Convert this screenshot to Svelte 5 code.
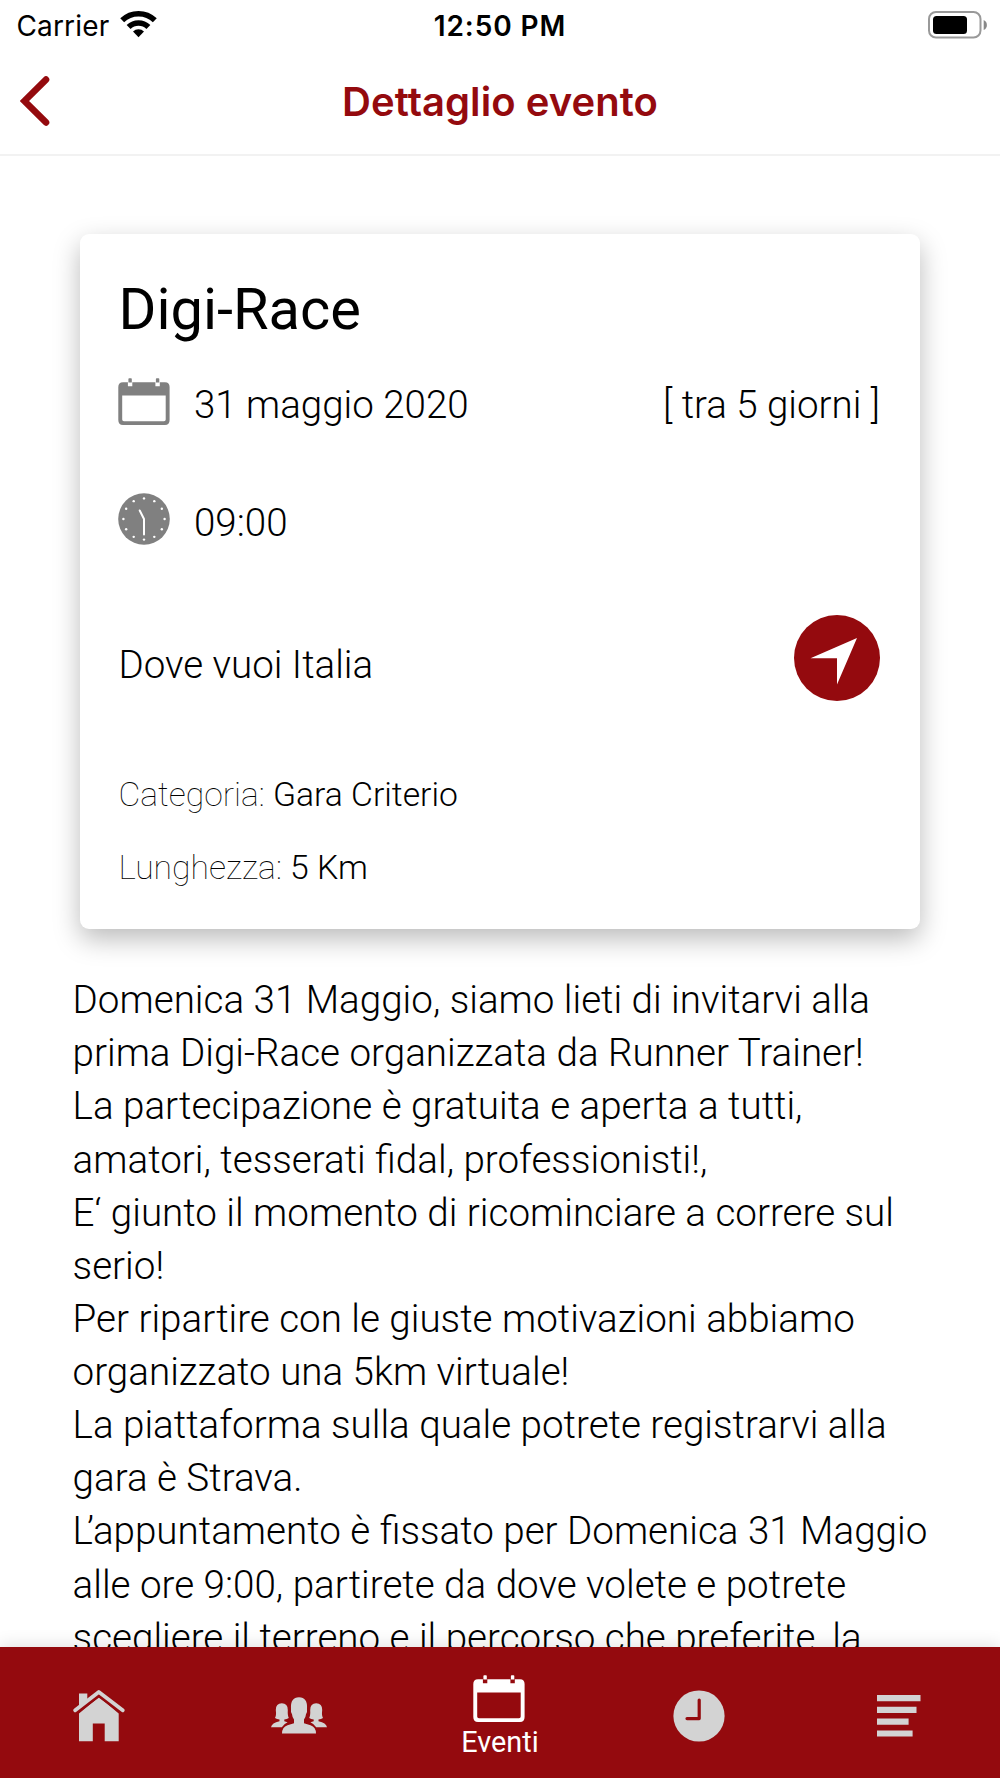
<script>
  const description = [
    { text: 'Domenica 31 Maggio, siamo lieti di invitarvi alla' },
    { text: 'prima Digi-Race organizzata da Runner Trainer!' },
    { text: 'La partecipazione è gratuita e aperta a tutti,' },
    { text: 'amatori, tesserati fidal, professionisti!,' },
    { text: 'E‘ giunto il momento di ricominciare a correre sul' },
    { text: 'serio!' },
    { text: 'Per ripartire con le giuste motivazioni abbiamo' },
    { text: 'organizzato una 5km virtuale!' },
    { text: 'La piattaforma sulla quale potrete registrarvi alla' },
    { text: 'gara è Strava.' },
    { initial: 'L', text: '’appuntamento è fissato per Domenica 31 Maggio' },
    { text: 'alle ore 9:00, partirete da dove volete e potrete' },
    { text: 'scegliere il terreno e il percorso che preferite, la' }
  ];
  const ticks = Array.from({ length: 12 }, (_, i) => {
    const a = (i * Math.PI) / 6;
    return { x: 26 + 20.6 * Math.sin(a), y: 26 - 20.6 * Math.cos(a) };
  });
</script>

{#snippet calendar()}
  <svg class="calendar" viewBox="0 0 52 48" width="52" height="48">
    <path
      fill="currentColor"
      fill-rule="evenodd"
      d="M5 4.3H9.9V8.3H14.3V4.3H37.4V8.3H41.8V4.3H47Q51.6 4.5 51.6 9V42Q51.6 47 47 47H5Q.3 47 .3 42V9Q.3 4.5 5 4.3ZM4.2 17.6V41.5Q4.2 43.2 6 43.2H46Q47.7 43.2 47.7 41.5V17.6Z"
    />
    <path fill="currentColor" d="M10.4 1Q10.4 .2 11.2 .2H13Q13.8 .2 13.8 1V4.5H10.4ZM37.9 1Q37.9 .2 38.7 .2H40.5Q41.3 .2 41.3 1V4.5H37.9Z" />
  </svg>
{/snippet}

<div class="screen">
  <div class="status">
    <div class="carrier">
      <span>Carrier</span>
      <svg viewBox="0 0 37 28" width="37" height="28">
        <path fill="none" stroke="#000" stroke-width="5.6" d="M2.2 10.3A23.4 23.4 0 0 1 34.8 10.3" />
        <path fill="none" stroke="#000" stroke-width="5.6" d="M8.6 17A14.2 14.2 0 0 1 28.4 17" />
        <path d="M18.5 27.2 13 21.5A7.8 7.8 0 0 1 24 21.5Z" />
      </svg>
    </div>
    <div class="time">12:50 PM</div>
    <svg class="battery" viewBox="0 0 60 28" width="60" height="28">
      <rect x="1" y="1" width="51.5" height="25.5" rx="7" fill="#fff" stroke="#999" stroke-width="2" />
      <rect x="5" y="5" width="34" height="18" rx="3.5" />
      <path fill="#888" d="M55.7 9Q58.9 10.5 58.9 14T55.7 19Z" />
    </svg>
  </div>

  <header class="header">
    <svg class="back" viewBox="0 0 30 50" width="30" height="50">
      <path fill="none" stroke="#940a0e" stroke-width="6.6" stroke-linecap="round" d="M26 3.6 4.5 25 26 46.4" />
    </svg>
    <h1>Dettaglio evento</h1>
  </header>

  <main class="content">
    <section class="card">
      <h2>Digi-Race</h2>
      <div class="row date">
        <span class="icon">{@render calendar()}</span>
        <span class="text">31 maggio 2020</span>
        <span class="text remaining">[ tra 5 giorni ]</span>
      </div>
      <div class="row hour">
        <svg class="icon" viewBox="0 0 52 52" width="52" height="52">
          <circle cx="26" cy="26" r="25.8" fill="#808080" />
          {#each ticks as t}
            <circle cx={t.x} cy={t.y} r="1.2" fill="#fff" />
          {/each}
          <path fill="none" stroke="#fff" stroke-width="2" stroke-linecap="round" stroke-linejoin="round" d="M21.7 17.5 26 26V41.5" />
        </svg>
        <span class="text">09:00</span>
      </div>
      <div class="row place">
        <span class="text">Dove vuoi Italia</span>
        <svg class="locate" viewBox="0 0 86 86" width="86" height="86">
          <circle cx="43" cy="43" r="43" fill="#940a0e" />
          <path fill="#fff" d="M63 23 16.5 43.3H43V69.5Z" />
        </svg>
      </div>
      <p class="detail"><span class="label">Categoria:</span> <span class="value">Gara Criterio</span></p>
      <p class="detail"><span class="label">Lunghezza:</span> <span class="value">5 Km</span></p>
    </section>

    <div class="description">
      {#each description as line}
        <p>{#if line.initial}<span class="initial">{line.initial}</span>{/if}{line.text}</p>
      {/each}
    </div>
  </main>

  <nav class="tabs">
    <div class="tab">
      <svg viewBox="0 0 52 52" width="52" height="52">
        <path fill="currentColor" d="M6 23.5 26 7 45.7 23.5V51.3H31.7V33.5H19.8V51.3H6Z" />
        <path fill="none" stroke="#940a0e" stroke-width="7.4" stroke-linejoin="round" d="M2.2 20.8 25.8 3 49.7 20.8" />
        <path fill="none" stroke="currentColor" stroke-width="3.8" stroke-linecap="round" stroke-linejoin="round" d="M2.2 20.3 25.8 2 49.7 20.3" />
        <path fill="currentColor" d="M6 3.5H14.3V10.5L6 17Z" />
      </svg>
    </div>
    <div class="tab">
      <svg viewBox="0 0 56 37" width="56" height="37">
        <path fill="currentColor" d="M0 30.3Q.8 26 8.5 24.3V22.5Q5.8 22 4 21 5.5 18.5 4.8 13 4.8 6.3 10.8 6.3T16.8 13Q16.5 18.5 17.8 21 16 22.3 13.3 22.5V24.3L16.6 25.2Q12.5 27 10.8 30.3Z" />
        <path fill="currentColor" d="M56 30.3Q55.2 26 47.5 24.3V22.5Q50.2 22 52 21 50.5 18.5 51.2 13 51.2 6.3 45.2 6.3T39.2 13Q39.5 18.5 38.2 21 40 22.3 42.7 22.5V24.3L39.4 25.2Q43.5 27 45.2 30.3Z" />
        <path fill="currentColor" d="M11 36.5Q11 30 16.5 28.2L23 26.2V22.5Q21.3 20.5 21 17.3 19.5 15.5 20 12Q19.2 .3 28 .3T36 12Q36.5 15.5 35 17.3 34.7 20.5 33 22.5V26.2L39.5 28.2Q45 30 45 36.5Z" />
      </svg>
    </div>
    <div class="tab active">
      {@render calendar()}
      <span class="tab-label">Eventi</span>
    </div>
    <div class="tab">
      <svg viewBox="0 0 52 52" width="52" height="52">
        <circle cx="26" cy="26" r="25.6" fill="currentColor" />
        <path fill="none" stroke="#940a0e" stroke-width="3.2" stroke-linecap="round" stroke-linejoin="round" d="M26.2 10V28.6H14" />
      </svg>
    </div>
    <div class="tab">
      <svg viewBox="0 0 44 42" width="44" height="42">
        <path fill="currentColor" d="M0 0H43.5V6.2H0ZM0 11.8H39.5V18H0ZM0 23.6H31.6V29.8H0ZM0 35.4H35.6V41.6H0Z" />
      </svg>
    </div>
  </nav>
</div>

<style>
  :global(body) {
    margin: 0;
    background: #fff;
  }
  .screen {
    width: 1000px;
    height: 1778px;
    display: flex;
    flex-direction: column;
    overflow: hidden;
    background: #fff;
    color: #000;
    font-family: Roboto, 'Liberation Sans', sans-serif;
    font-weight: 300;
    white-space: nowrap;
  }
  svg {
    display: block;
    flex: none;
  }
  h1,
  h2,
  p {
    margin: 0;
  }
  .status {
    flex: none;
    height: 50px;
    display: grid;
    grid-template-columns: 1fr auto 1fr;
    font-family: Inter, 'Liberation Sans', sans-serif;
    font-size: 28px;
    line-height: 53px;
  }
  .carrier {
    display: flex;
    gap: 11px;
    padding-left: 16.5px;
    font-weight: 400;
    letter-spacing: 0.15px;
  }
  .carrier svg {
    margin-top: 9.5px;
  }
  .time {
    font-weight: 600;
    letter-spacing: 0.9px;
  }
  .battery {
    justify-self: end;
    margin: 10.5px 12px 0 0;
  }
  .header {
    flex: none;
    height: 104px;
    display: grid;
    grid-template-columns: 1fr auto 1fr;
    align-items: start;
    border-bottom: 2px solid #f2f2f2;
    color: #940a0e;
    font-family: Inter, 'Liberation Sans', sans-serif;
  }
  .back {
    margin: 26px 0 0 20px;
  }
  .header h1 {
    font-size: 40px;
    line-height: 104px;
    font-weight: 600;
    letter-spacing: 0.06px;
  }
  .content {
    flex: 1;
    min-height: 0;
    overflow: hidden;
    padding-top: 78px;
  }
  .card {
    box-sizing: border-box;
    width: 840px;
    height: 695px;
    margin: 0 auto;
    padding: 40px 40px 0 38.5px;
    border-radius: 9px;
    background: #fff;
    box-shadow: 0 10px 27px rgba(0, 0, 0, 0.27);
    font-size: 38.5px;
  }
  .card h2 {
    font-size: 57.8px;
    line-height: 70px;
    font-weight: 400;
  }
  .row {
    display: flex;
    align-items: center;
    height: 64px;
  }
  .row .icon {
    margin: -5px 24px 0 -0.5px;
    color: #808080;
  }
  .text {
    padding-top: 3px;
  }
  .date {
    margin-top: 28px;
  }
  .date .text {
    padding-top: 1px;
  }
  .remaining {
    margin-left: auto;
  }
  .hour {
    margin-top: 53px;
  }
  .place {
    height: 86px;
    margin: 67px 0 53px;
    justify-content: space-between;
  }
  .locate {
    margin-bottom: 10px;
  }
  .detail {
    font-size: 33.7px;
    line-height: 72.6px;
  }
  .label {
    font-weight: 100;
  }
  .description {
    margin: 44.2px 0 0 72.6px;
    font-size: 38.6px;
    line-height: 53.13px;
  }
  .initial {
    letter-spacing: -6px;
  }
  .tabs {
    flex: none;
    position: relative;
    height: 131px;
    display: grid;
    grid-template-columns: repeat(5, 1fr);
    background: #940a0e;
    color: #d3d3d3;
    box-shadow: 0 -2px 16px rgba(0, 0, 0, 0.12);
  }
  .tab {
    display: flex;
    flex-direction: column;
    align-items: center;
    justify-content: center;
    padding-top: 6px;
    margin-left: -3px;
  }
  .tab.active {
    color: #fff;
    justify-content: flex-start;
    padding-top: 28px;
    margin-left: -2px;
  }
  .tab-label {
    font-size: 28.8px;
    font-weight: 400;
    line-height: 36px;
    margin-top: 1px;
    padding-left: 2px;
  }
</style>
